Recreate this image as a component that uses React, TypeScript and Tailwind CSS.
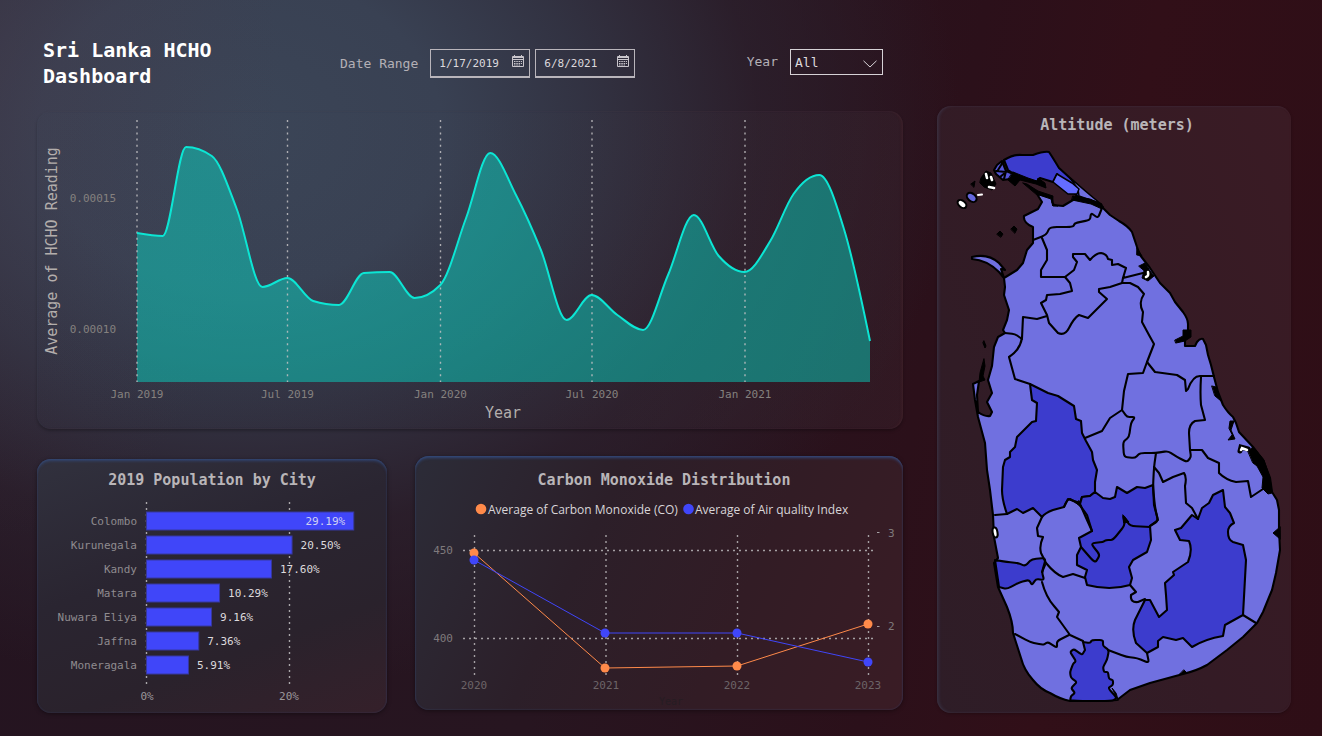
import type { ReactNode } from "react";

type Point = [number, number];

const MONO = "font-['DejaVu_Sans_Mono','Liberation_Mono',monospace]";

/* Monthly readings: days since January 1, 2019 and the height on the plot. */
const readings: Point[] = [
  [0, 233], [31, 236], [59, 147], [90, 156], [120, 209], [151, 287], [181, 278], [212, 301], [243, 305],
  [273, 273], [304, 272], [334, 298], [365, 285], [396, 218], [425, 153], [456, 195], [486, 250], [517, 320],
  [547, 295], [578, 315], [609, 330], [639, 275], [670, 215], [700, 256], [731, 272], [762, 241], [790, 194],
  [821, 175], [851, 230], [882, 341],
];

const curve: Point[] = readings.map(([day, y]) => [137 + (day * 733) / 882, y]);

/* Monotone cubic interpolation through the points. */
function monotonePath(p: Point[]): string {
  const n = p.length;
  const h: number[] = [];
  const s: number[] = [];
  for (let i = 0; i < n - 1; i++) {
    h.push(p[i + 1][0] - p[i][0]);
    s.push((p[i + 1][1] - p[i][1]) / h[i]);
  }
  const m: number[] = new Array(n).fill(0);
  for (let i = 1; i < n - 1; i++) {
    const a = s[i - 1];
    const b = s[i];
    const q = (a * h[i] + b * h[i - 1]) / (h[i - 1] + h[i]);
    m[i] = (Math.sign(a) + Math.sign(b)) * Math.min(Math.abs(a), Math.abs(b), 0.5 * Math.abs(q));
  }
  m[0] = (3 * s[0] - m[1]) / 2;
  m[n - 1] = (3 * s[n - 2] - m[n - 2]) / 2;
  let d = `M${p[0][0]},${p[0][1]}`;
  for (let i = 0; i < n - 1; i++) {
    const k = h[i] / 3;
    d += `C${p[i][0] + k},${p[i][1] + k * m[i]} ${p[i + 1][0] - k},${p[i + 1][1] - k * m[i + 1]} ${p[i + 1][0]},${p[i + 1][1]}`;
  }
  return d;
}

const yearTicks = [
  { x: 137, label: "Jan 2019" },
  { x: 287.5, label: "Jul 2019" },
  { x: 440.5, label: "Jan 2020" },
  { x: 592, label: "Jul 2020" },
  { x: 745, label: "Jan 2021" },
];

const cities = [
  { name: "Colombo", share: 29.19 },
  { name: "Kurunegala", share: 20.5 },
  { name: "Kandy", share: 17.6 },
  { name: "Matara", share: 10.29 },
  { name: "Nuwara Eliya", share: 9.16 },
  { name: "Jaffna", share: 7.36 },
  { name: "Moneragala", share: 5.91 },
];

const carbon: Point[] = [[474, 553], [605, 668], [737, 666], [868, 624]];
const airQuality: Point[] = [[474, 560], [605, 633], [737, 633], [868, 662]];

function Panel({ className, children }: { className: string; children: ReactNode }) {
  return <section className={`overflow-hidden rounded-[14px] ${className}`}>{children}</section>;
}

function CalendarIcon() {
  return (
    <svg viewBox="0 0 14 13" className="mb-1 h-[13px] w-[14px] shrink-0" fill="none" stroke="#c9c5cb" strokeWidth="1" aria-hidden="true">
      <path d="M1.5 1.5h11v10h-11zM1.500 2.500h11M1.5 4.5h11M3.5 0v2.500M10.5 0v2.500" />
      <path d="M3 6.5h8M3 8.5h8M3 10h6" strokeDasharray="1.5 0.8" />
    </svg>
  );
}

function DateField({ label, value }: { label: string; value: string }) {
  return (
    <div className="flex h-[29px] w-[100px] items-center border border-b-2 border-[#b9b5bb] pr-1 pl-2">
      <input
        type="text"
        aria-label={label}
        defaultValue={value}
        className="min-w-0 flex-1 bg-transparent pt-0.5 text-[11px] leading-4 text-[#dcd9dd] outline-none"
      />
      <CalendarIcon />
    </div>
  );
}

function Header() {
  return (
    <header className="flex h-[111px] items-start pl-1.5">
      <h1 className="w-[297px] pt-[37px] pr-[90px] text-[20px] leading-[26px] font-bold text-white">Sri Lanka HCHO Dashboard</h1>
      <div className="flex items-center gap-3 pt-[49px] text-[13px] text-[#b4b0b6]">
        <span className="whitespace-nowrap">Date Range</span>
        <div className="flex gap-[5px]">
          <DateField label="Start date" value="1/17/2019" />
          <DateField label="End date" value="6/8/2021" />
        </div>
      </div>
      <div className="mr-5 ml-auto flex items-center gap-3 pt-[49px] text-[13px] text-[#b4b0b6]">
        <label htmlFor="year">Year</label>
        <div className="grid items-center">
          <select
            id="year"
            className="col-start-1 row-start-1 h-[26px] w-[93px] appearance-none border border-[#d6d2d6] bg-transparent pt-0.5 pl-1 text-[13px] text-[#dcd9dd] outline-none"
          >
            <option>All</option>
          </select>
          <svg viewBox="0 0 14 8" className="pointer-events-none col-start-1 row-start-1 mt-1 mr-1.5 h-2 w-3.5 justify-self-end" fill="none" stroke="#d6d2d6" aria-hidden="true">
            <path d="M.5 .8L7 7L13.5 .8" />
          </svg>
        </div>
      </div>
    </header>
  );
}

function ReadingChart() {
  const line = monotonePath(curve);
  return (
    <svg viewBox="37 111 866 318" className="block h-auto w-full" role="img" aria-label="Average of HCHO Reading by Year">
      <path d={`${line}V382H137Z`} fill="#00f2da" fillOpacity="0.41" />
      <g stroke="#c4c2c4" strokeOpacity="0.85" strokeWidth="1.4" strokeDasharray="2 4.2">
        {yearTicks.map((t) => (
          <line key={t.x} x1={t.x} x2={t.x} y1="120" y2="382" />
        ))}
      </g>
      <path d={line} fill="none" stroke="#0ce6d4" strokeWidth="2" strokeLinejoin="round" />
      <g fill="#85817f" fontSize="11">
        {yearTicks.map((t) => (
          <text key={t.x} x={t.x} y="398" textAnchor="middle">{t.label}</text>
        ))}
        <text x="116" y="202" textAnchor="end">0.00015</text>
        <text x="116" y="333" textAnchor="end">0.00010</text>
      </g>
      <g fill="#b3aeac" fontSize="15" textAnchor="middle">
        <text x="503" y="418">Year</text>
        <text transform="translate(57 251) rotate(-90)">Average of HCHO Reading</text>
      </g>
    </svg>
  );
}

function PopulationChart() {
  return (
    <svg viewBox="37 491 350 222" className="block h-auto w-full" role="img" aria-label="2019 Population by City">
      <g stroke="#aaa7aa" strokeWidth="1.4" strokeDasharray="2 4">
        <path d="M146.500 502V686M289.500 502V686" />
      </g>
      {cities.map((c, i) => {
        const width = c.share * 7.1;
        const y = 512 + i * 24;
        const inside = c.share > 25;
        return (
          <g key={c.name} fontSize="11">
            <rect x="146.500" y={y} width={width} height="18" fill="#4046f9" stroke="#37389f" strokeWidth="1" />
            <text x="137" y={y + 13} textAnchor="end" fill="#8f8b8f">{c.name}</text>
            <text x={146 + width + (inside ? -8 : 9)} y={y + 13} textAnchor={inside ? "end" : "start"} fill={inside ? "#cfd0f2" : "#dcd9dc"}>
              {`${c.share.toFixed(2)}%`}
            </text>
          </g>
        );
      })}
      <g fill="#9b979b" fontSize="11" textAnchor="middle">
        <text x="147" y="700">0%</text>
        <text x="289" y="700">20%</text>
      </g>
    </svg>
  );
}

function Series({ points, color }: { points: Point[]; color: string }) {
  return (
    <g>
      <polyline points={points.map((p) => p.join(",")).join(" ")} fill="none" stroke={color} strokeWidth="1" />
      {points.map(([x, y]) => (
        <circle key={x} cx={x} cy={y} r="4.500" fill={color} />
      ))}
    </g>
  );
}

function CarbonChart() {
  return (
    <svg viewBox="415 491 488 219" className="block h-auto w-full" role="img" aria-label="Carbon Monoxide and Air quality Index by year">
      <circle cx="481" cy="509" r="5.300" fill="#ff8a4a" />
      <circle cx="688.500" cy="509" r="5.300" fill="#4046f9" />
      <g className="font-['Open_Sans','Noto_Sans',sans-serif]" fontSize="12" fill="#d8d5d8">
        <text x="488" y="514">Average of Carbon Monoxide (CO)</text>
        <text x="695" y="514">Average of Air quality Index</text>
      </g>
      <g stroke="#a5a0a4" strokeWidth="1.400" strokeDasharray="2 4">
        <path d="M474.500 535V675M606 535V675M737.500 535V675M868.500 535V675M463 550.500H876M463 638.500H876" />
      </g>
      <path d="M877 532.500h2.500M877 626.500h2.500" stroke="#a5a0a4" />
      <Series points={carbon} color="#ff8a4a" />
      <Series points={airQuality} color="#4046f9" />
      <g fill="#7f7a7c" fontSize="11">
        <text x="453" y="554" textAnchor="end">450</text>
        <text x="453" y="642" textAnchor="end">400</text>
        <text x="888" y="537">3</text>
        <text x="888" y="630">2</text>
      </g>
      <g fill="#6c6467" fontSize="11" textAnchor="middle">
        <text x="474" y="689">2020</text>
        <text x="606" y="689">2021</text>
        <text x="737" y="689">2022</text>
        <text x="868" y="689">2023</text>
        <text x="671" y="705" fontSize="10" fill="#261c23">Year</text>
      </g>
    </svg>
  );
}

const island =
  "M1102,207L1110,215L1119,221Q1128,226 1132,232L1137,247L1140,255L1150,268L1160,283L1170,293L1175,302L1183,312Q1188,319 1188,324L1188,335L1185,339L1185,346L1195,346L1197,342Q1200,338 1203,339L1206,345L1208,355L1211,365L1214,377L1218,392L1223,405Q1228,413 1233,417L1236,423L1239,432L1253,447L1263,460L1270,478L1272,492L1277,500L1279,510L1279,530L1280,550L1276,573L1272,590L1263,612L1257,623L1243,637L1227,650L1207,665Q1196,671 1183,674L1150,683L1130,690L1117,700L1103,701L1070,701Q1060,699 1050,693Q1040,689 1033,680Q1024,670 1021,658L1013,633Q1013,622 1007,607L998,587L994,563L998,558L994,537L993,515L990,490L987,470L985,443L978,417L975,400L973,384L979,381L977,395L978,412Q985,417 990,416L992,412L987,402L992,393L988,380L992,366L994,347L998,337L1005,333L1003,330L1007,320L1009,310L1004,295L1005,287L1004,278L1017,270L1023,263L1027,250L1033,243L1033,227Q1023,223 1024,216L1038,209L1042,202L1037,194L1052,197L1053,205L1063,206L1073,200L1084,199Z";

const darkDistricts = [
  "M1030,384L1048,393L1058,396L1074,406L1076,419L1081,421L1082,433L1086,441L1092,452L1093,460L1097,470L1095,482L1095,492L1090,496L1082,497L1080,503L1068,499L1064,507L1053,510Q1045,513 1042,517L1033,508L1023,513L1017,509L1007,514Q1002,500 1002,490L1003,467L1005,460L1010,457L1010,452L1015,447L1017,437L1032,422L1036,421L1037,403L1032,400Z",
  "M1080,504L1082,497L1090,496L1095,492L1103,498L1110,499L1115,497L1117,487L1127,493L1137,487L1145,488L1153,485L1154,505L1158,520L1150,526L1151,540L1147,552L1133,560L1129,567L1132,578L1130,585Q1110,591 1087,585L1085,577L1087,570L1077,565L1077,555L1081,547L1079,538L1092,531L1087,520Z",
  "M995,560L1007,562L1018,563L1025,566L1032,559L1046,558L1042,572L1044,580L1036,579L1032,585L1029,580L1020,582L1007,589L999,587Z",
  "M1083,642L1090,643L1092,640L1103,640L1103,646L1109,650L1107,660L1103,667L1104,672L1108,672L1109,679L1113,680L1113,685L1108,688L1117,698L1112,701L1070,701L1071,696L1075,693L1071,688L1077,682L1071,678L1070,672L1073,664L1076,661L1070,652L1074,649L1082,655L1085,650Z",
  "M1223,490L1225,507L1230,513L1234,523Q1228,526 1228,532Q1228,540 1233,542L1243,545L1246,560L1243,615L1225,625L1223,636Q1205,639 1192,647L1183,638L1176,640L1163,637L1158,641L1158,647L1147,653L1136,643Q1131,630 1135,620L1145,600L1150,600L1159,617L1167,610L1166,595L1165,583L1174,575L1173,572L1188,562Q1193,550 1189,541L1180,540L1175,530L1181,528L1192,515L1198,519L1202,508L1209,503L1213,495Z",
];

const borders = [
  "M1102,208L1098,218L1091,213L1090,220L1075,223L1073,227L1050,227L1046,235L1033,240",
  "M1042,238L1047,250L1047,260L1041,270L1041,277L1065,277L1074,270L1077,262L1073,257L1073,254L1085,254L1090,260Q1096,253 1101,253Q1107,254 1108,259L1112,260L1112,265L1118,264L1126,268L1123,278L1143,273",
  "M1065,277L1070,283L1072,291L1060,294L1047,295L1046,300L1041,303L1047,315L1049,323L1058,333Q1065,336 1069,328Q1074,318 1079,315L1088,318L1107,299L1099,292L1099,289L1110,287L1122,283L1130,283L1138,287L1144,294Q1138,303 1143,312L1142,322L1149,335L1154,344L1147,362L1143,373L1128,374L1124,391L1122,410L1110,418L1102,431L1085,438",
  "M1123,278L1122,283M1047,316L1037,319L1023,317L1022,338Q1020,350 1009,357L1015,379L1030,384",
  "M1005,333L1015,334L1022,339",
  "M1147,362L1155,372L1177,375L1185,380L1186,391L1188,389Q1193,375 1201,376L1214,376",
  "M1201,377Q1200,393 1201,405L1205,420L1195,421Q1189,424 1189,433L1190,450L1202,450L1208,458L1219,463L1219,473Q1226,480 1236,482L1248,481L1251,497L1263,489",
  "M1190,450L1191,457L1187,462L1177,457L1168,451L1156,453L1140,453L1135,458L1124,457L1123,442L1129,437L1131,423L1135,417L1127,417L1122,410",
  "M1156,453L1154,467L1153,487L1155,507L1158,521L1150,526",
  "M1154,467L1159,473L1163,482L1173,477L1184,473Q1187,477 1185,486L1186,503L1192,508L1198,519",
  "M1007,514L995,515",
  "M1081,547L1095,563L1100,555L1092,545L1093,543L1103,542L1106,540L1113,540L1125,525L1123,515L1130,526L1150,527",
  "M1064,507Q1067,499 1070,499L1079,504L1087,515L1092,531M1042,517L1037,528L1038,536L1043,537Q1039,546 1041,553L1046,563Q1055,574 1063,577L1073,574L1085,578",
  "M1045,565L1042,572M1042,582Q1046,597 1054,606L1059,612L1057,617L1070,635L1083,641M1108,650L1127,657L1137,658L1149,663L1147,653",
  "M1015,634L1030,642L1043,645L1048,642L1057,648L1057,641L1069,635",
  "M1130,585L1136,592L1131,595Q1130,603 1138,602L1145,599M1243,615L1256,623",
];

const inlets = [
  "M1248,451L1253,447L1264,460L1270,478L1272,493L1268,494L1262,488L1263,477L1257,466L1253,463Z",
  "M1175,340L1183,336L1183,330L1191,330L1191,337L1185,341L1176,343Z",
  "M1212,386L1216,387L1218,394L1221,401L1215,396Z",
  "M1229,428L1230,421L1234,421L1231,430L1235,439L1228,440L1232,435Z",
  "M1280,527L1273,533L1280,539Z",
  "M1139,266L1145,263L1150,271L1154,276L1148,281L1142,278L1144,271Z",
  "M1137,248L1142,256L1137,255Z",
  "M1023,183L1027,184L1038,191L1053,196L1052,203L1058,206L1053,206L1051,199L1036,194Z",
  "M1013,172L1028,178L1037,181L1038,178L1045,183L1046,188L1036,184L1020,180L1015,186L1008,180Z",
  "M1073,196L1090,199L1102,204L1102,209L1091,204L1072,200Z",
  "M997,234L1000,231L1003,234L1001,237Z",
  "M1011,229L1014,226L1017,229L1015,233Z",
  "M971,184L975,181L974,187Z",
  "M984,341L986,346L985,348L983,343Z",
  "M984,359L985,366L983,376L985,380L979,382L980,373Z",
  "M981,178L986,171L991,173L996,184L992,190L984,187L980,183Z",
  "M1118,700L1112,688L1116,693ZM1184,670L1187,673L1180,674Z",
  "M1079,501L1082,508L1076,503ZM1123,515L1129,522L1124,523Z",
];

/* Rounds the corners of a path made of straight segments. */
function soften(d: string): string {
  return d.replace(/M[^MZ]+/g, (part) => {
    if (part.includes("Q")) return part;
    const pts = part.slice(1).split("L").map((s) => s.split(",").map(Number) as Point);
    if (pts.length < 3) return part;
    let out = `M${pts[0].join(",")}`;
    for (let i = 1; i < pts.length - 1; i++) {
      const [x, y] = pts[i];
      const near = ([a, b]: Point) => `${x + (a - x) * 0.3},${y + (b - y) * 0.3}`;
      out += `L${near(pts[i - 1])}Q${x},${y} ${near(pts[i + 1])}`;
    }
    return `${out}L${pts[pts.length - 1].join(",")}`;
  });
}

function AltitudeMap() {
  return (
    <svg viewBox="937 140 354 573" className="block h-auto w-full" role="img" aria-label="Map of Sri Lanka shaded by altitude">
      <g stroke="#000" strokeWidth="2.100" strokeLinejoin="round" strokeLinecap="round">
        <path d={island} fill="#7070e0" />
        <path d="M972,257Q988,253 999,263L1005,270L1001,269L1004,278L999,272Q987,260 972,259Z" fill="#7070e0" />
        <path d="M1004,160Q1014,154 1022,155L1033,155Q1044,151 1049,152Q1053,158 1059,168L1080,187L1103,207L1077,196L1057,174L1053,182L1040,178L1037,182L1020,178L1008,170Z" fill="#3c3ccd" />
        <path d="M1070,178L1090,195L1101,204L1079,196L1078,189Z" fill="#7070e0" strokeWidth="1.500" />
        <path d="M1057,174L1072,183L1079,189L1077,194L1068,194L1053,182Z" fill="#646cff" strokeWidth="1.500" />
        <path d="M997,165L1002,161L1006,171L1016,175L1010,179L1003,180L996,174L994,170Z" fill="#5556d8" />
        <path d="M996,171L1006,172L1000,177M1003,162L998,170M1006,171L1004,179" fill="none" />
        <ellipse cx="962" cy="204" rx="5" ry="3.200" transform="rotate(40 962 204)" fill="#fff" />
        <ellipse cx="972" cy="197.500" rx="5.500" ry="3.800" transform="rotate(40 972 197)" fill="#6466dc" />
        {darkDistricts.map((d) => (
          <path key={d} d={soften(d)} fill="#3c3ccd" />
        ))}
        {borders.map((d) => (
          <path key={d} d={soften(d)} fill="none" />
        ))}
        {inlets.map((d) => (
          <path key={d} d={d} strokeWidth="1" />
        ))}
        <ellipse cx="995" cy="532.500" rx="2.400" ry="5" fill="#fff" transform="rotate(-10 995 532)" />
      </g>
      <g stroke="#fff" fill="none" strokeLinecap="round">
        <path d="M1148,272Q1149,276 1146,277" strokeWidth="2.500" />
        <path d="M1240,451L1241,447L1248,449" stroke="#000" strokeWidth="5" />
        <path d="M1241,450L1242,448L1247,450" strokeWidth="2.500" />
        <path d="M986,174L987,178M991,177L992,180M989,187L994,188" strokeWidth="2.600" />
        <path d="M978,195L982,194.500" strokeWidth="2" />
      </g>
    </svg>
  );
}

export default function App() {
  return (
    <main
      className={`flex min-h-screen items-start gap-[34px] bg-[#2c111b] bg-[radial-gradient(ellipse_280px_480px_at_0px_60px,rgba(72,56,72,0.350)_0%,rgba(72,56,72,0)_100%),radial-gradient(ellipse_720px_560px_at_240px_130px,#3b4557_0%,#394153_28%,rgba(51,53,69,0.920)_48%,rgba(44,34,47,0.700)_72%,rgba(44,17,27,0)_100%),linear-gradient(100deg,#241420_0%,#271520_45%,#2b101a_68%,#310f18_80%,#2e0e16_100%)] pr-[31px] pb-[23px] pl-[37px] ${MONO}`}
    >
      <div className="min-w-0 flex-[866]">
        <Header />
        <Panel className="bg-[linear-gradient(100deg,rgba(60,72,90,0.080)_0%,rgba(60,65,80,0.060)_50%,rgba(70,50,60,0.250)_100%)] shadow-[0_2px_3px_rgba(0,0,0,0.250),inset_-2px_0_2px_rgba(110,50,50,0.150),inset_0_0_2px_rgba(90,105,135,0.150)]">
          <ReadingChart />
        </Panel>
        <div className="flex items-start gap-7">
          <Panel className="mt-[30px] min-w-0 flex-[350] bg-[linear-gradient(160deg,#31313e_0%,#2a2531_40%,#2a222c_70%,#35202a_100%)] shadow-[0_1px_4px_rgba(0,0,0,0.400),inset_0_3px_3px_-1px_rgba(52,84,145,0.600),inset_0_0_2px_rgba(62,82,130,0.500)]">
            <h2 className="pt-2.5 text-center text-[15px] leading-[22px] font-bold text-[#b9b5b8]">2019 Population by City</h2>
            <PopulationChart />
          </Panel>
          <Panel className="mt-[27px] min-w-0 flex-[488] bg-[linear-gradient(115deg,#2c2c38_0%,#2c1f29_35%,#321c25_65%,#3a1c25_100%)] shadow-[0_1px_4px_rgba(0,0,0,0.400),inset_0_3px_3px_-1px_rgba(52,84,145,0.700),inset_0_0_2px_rgba(62,82,130,0.600)]">
            <h2 className="pt-[13px] pr-1.5 pl-4 text-center text-[15px] leading-[22px] font-bold text-[#b9b5b8]">Carbon Monoxide Distribution</h2>
            <CarbonChart />
          </Panel>
        </div>
      </div>
      <aside className="min-w-0 flex-[354] pt-[106px]">
        <Panel className="bg-[linear-gradient(70deg,#2e1d27_0%,#341b25_50%,#3a1b24_100%)] shadow-[0_1px_3px_rgba(0,0,0,0.250),inset_2px_0_3px_rgba(70,80,110,0.350),inset_0_0_2px_rgba(110,60,70,0.200)]">
          <h2 className="pt-2 pb-1 pl-1.5 text-center text-[15px] leading-[22px] font-bold text-[#b9b5b8]">Altitude (meters)</h2>
          <AltitudeMap />
        </Panel>
      </aside>
    </main>
  );
}
